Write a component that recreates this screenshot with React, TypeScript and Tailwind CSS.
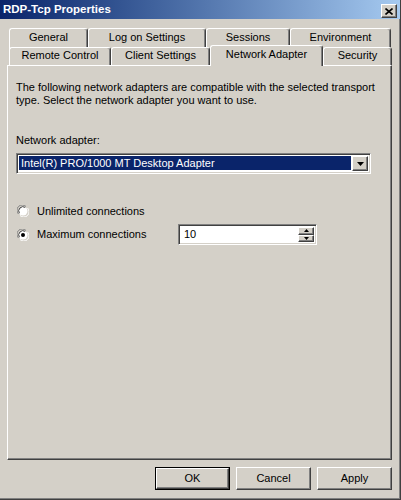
import React from "react";

// classic 3d edges
const raised =
  "border-t border-l border-t-white border-l-white border-r border-b border-r-[#404040] border-b-[#404040] shadow-[inset_-1px_-1px_0_#808080]";
const sunken =
  "border-t border-l border-t-[#808080] border-l-[#808080] border-r border-b border-r-white border-b-white shadow-[inset_1px_1px_0_#404040,inset_-1px_-1px_0_#d4d0c8]";

const tabEdge =
  "border-t border-l border-white border-r border-r-[#404040] shadow-[inset_-1px_0_0_#808080] rounded-t-[3px] bg-[#d4d0c8]";

type Tab = { label: string; w: string; active?: boolean };

const backRow: Tab[] = [
  { label: "General", w: "w-[79px]" },
  { label: "Log on Settings", w: "w-[118px]" },
  { label: "Sessions", w: "w-[84px]" },
  { label: "Environment", w: "w-[101px]" },
];

const frontRow: Tab[] = [
  { label: "Remote Control", w: "w-[102px]" },
  { label: "Client Settings", w: "w-[99px]" },
  { label: "Network Adapter", w: "w-[113px]", active: true },
  { label: "Security", w: "w-[69px]" },
];

const Radio = ({ checked }: { checked?: boolean }) => (
  <svg width="12" height="12" viewBox="0 0 12 12" className="shrink-0">
    <path d="M1.5 9 A5 5 0 0 1 9 1.5" fill="none" stroke="#808080" strokeWidth="1" />
    <path d="M10.5 3 A5 5 0 0 1 3 10.5" fill="none" stroke="#ffffff" strokeWidth="1" />
    <circle cx="6" cy="6" r="4.5" fill="#ffffff" />
    <path d="M2.4 8.2 A4.2 4.2 0 0 1 8.2 2.4" fill="none" stroke="#404040" strokeWidth="1" />
    {checked && <circle cx="6" cy="6" r="2" fill="#000000" />}
  </svg>
);

const Button = ({ label, isDefault }: { label: string; isDefault?: boolean }) => (
  <div className={`w-[75px] h-[23px] ${isDefault ? "border border-black" : ""}`}>
    <div className={`w-full h-full flex items-center justify-center ${raised}`}>
      {label}
    </div>
  </div>
);

const App = () => {
  return (
    <div
      className="w-[401px] h-[500px] bg-[#d4d0c8] flex flex-col border-r border-b border-[#404040] shadow-[inset_-1px_-1px_0_#808080] text-[11px] leading-[13px] text-black overflow-hidden"
      style={{ fontFamily: '"Liberation Sans", Arial, sans-serif' }}
    >
      {/* title bar */}
      <div className="h-[19px] flex items-center justify-between pl-[3px] pr-[3px] bg-gradient-to-r from-[#0a246a] to-[#a6caf0]">
        <span className="text-white font-bold text-[11.5px]">RDP-Tcp Properties</span>
        <div className={`w-[16px] h-[14px] mt-[3px] flex items-center justify-center bg-[#d4d0c8] ${raised}`}>
          <svg width="8" height="7" viewBox="0 0 8 7">
            <path d="M0.5 0.5 L7.5 6.5 M7.5 0.5 L0.5 6.5" stroke="#000" strokeWidth="1.6" />
          </svg>
        </div>
      </div>

      {/* tabs */}
      <div className="ml-[7px] w-[385px] pt-[9px] flex flex-col">
        <div className="flex h-[19px] pl-[2px]">
          {backRow.map((t) => (
            <div key={t.label} className={`${t.w} h-[22px] flex justify-center pt-[2px] ${tabEdge}`}>
              {t.label}
            </div>
          ))}
        </div>
        <div className="flex h-[18px] pl-[2px] items-end relative">
          {frontRow.map((t) =>
            t.active ? (
              <div
                key={t.label}
                className={`${t.w} h-[21px] -mb-[1px] relative z-10 flex justify-center pt-[2px] ${tabEdge}`}
              >
                {t.label}
              </div>
            ) : (
              <div key={t.label} className={`${t.w} h-[18px] flex justify-center pt-[1px] ${tabEdge}`}>
                {t.label}
              </div>
            )
          )}
        </div>

        {/* panel */}
        <div className="h-[395px] border-t border-l border-white border-r border-b border-r-[#404040] border-b-[#404040] shadow-[inset_-1px_-1px_0_#808080] pt-[15px] pl-[8px] flex flex-col">
          <p>
            The following network adapters are compatible with the selected transport
            <br />
            type. Select the network adapter you want to use.
          </p>

          <p className="mt-[27px]">Network adapter:</p>

          <div className={`mt-[6px] w-[355px] h-[21px] flex bg-white ${sunken} p-[2px] pr-[2px]`}>
            <div className="flex-1 bg-[#0a246a] text-white flex items-center pl-[2px] mr-[1px] mb-[1px]">
              Intel(R) PRO/1000 MT Desktop Adapter
            </div>
            <div className={`w-[16px] h-full flex items-center justify-center bg-[#d4d0c8] ${raised}`}>
              <svg width="7" height="4" viewBox="0 0 7 4">
                <path d="M0 0 H7 L3.5 4 Z" fill="#000" />
              </svg>
            </div>
          </div>

          <div className="mt-[29px] ml-[1px] h-[16px] flex items-center">
            <Radio />
            <span className="ml-[8px]">Unlimited connections</span>
          </div>

          <div className="mt-[5px] ml-[1px] h-[21px] flex items-center">
            <div className="w-[161px] flex items-center">
              <Radio checked />
              <span className="ml-[8px]">Maximum connections</span>
            </div>
            <div className={`w-[139px] h-[21px] flex bg-white ${sunken} p-[2px]`}>
              <div className="flex-1 flex items-center pl-[3px]">10</div>
              <div className="w-[16px] flex flex-col">
                <div className={`flex-1 flex items-center justify-center bg-[#d4d0c8] ${raised}`}>
                  <svg width="5" height="3" viewBox="0 0 5 3">
                    <path d="M2.5 0 L5 3 H0 Z" fill="#000" />
                  </svg>
                </div>
                <div className={`flex-1 flex items-center justify-center bg-[#d4d0c8] ${raised}`}>
                  <svg width="5" height="3" viewBox="0 0 5 3">
                    <path d="M0 0 H5 L2.5 3 Z" fill="#000" />
                  </svg>
                </div>
              </div>
            </div>
          </div>
        </div>
      </div>

      {/* dialog buttons */}
      <div className="mt-[7px] flex justify-end gap-[6px] pr-[8px]">
        <Button label="OK" isDefault />
        <Button label="Cancel" />
        <Button label="Apply" />
      </div>
    </div>
  );
};

export default App;
